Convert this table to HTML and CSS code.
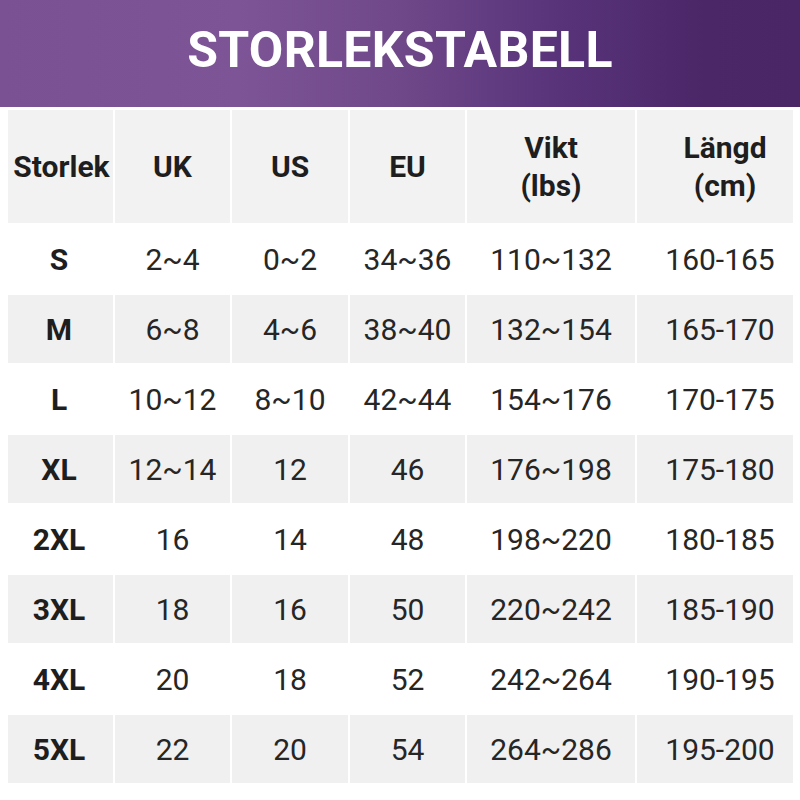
FILE: index.html
```html
<!DOCTYPE html>
<html lang="sv">
<head>
<meta charset="utf-8">
<title>Storlekstabell</title>
<link rel="stylesheet" href="styles.css">
</head>
<body>
<header class="banner"><h1 class="title">STORLEKSTABELL</h1></header>
<table class="chart">
<colgroup>
<col class="c1"><col class="c2"><col class="c3"><col class="c4"><col class="c5"><col class="c6">
</colgroup>
<thead>
<tr class="head"><th class="first">Storlek</th><th>UK</th><th>US</th><th>EU</th><th>Vikt<br>(lbs)</th><th class="last">Längd<br>(cm)</th></tr>
</thead>
<tbody>
<tr class="w"><th class="first">S</th><td>2~4</td><td>0~2</td><td>34~36</td><td>110~132</td><td class="last">160-165</td></tr>
<tr class="g"><th class="first">M</th><td>6~8</td><td>4~6</td><td>38~40</td><td>132~154</td><td class="last">165-170</td></tr>
<tr class="w"><th class="first">L</th><td>10~12</td><td>8~10</td><td>42~44</td><td>154~176</td><td class="last">170-175</td></tr>
<tr class="g"><th class="first">XL</th><td>12~14</td><td>12</td><td>46</td><td>176~198</td><td class="last">175-180</td></tr>
<tr class="w"><th class="first">2XL</th><td>16</td><td>14</td><td>48</td><td>198~220</td><td class="last">180-185</td></tr>
<tr class="g"><th class="first">3XL</th><td>18</td><td>16</td><td>50</td><td>220~242</td><td class="last">185-190</td></tr>
<tr class="w"><th class="first">4XL</th><td>20</td><td>18</td><td>52</td><td>242~264</td><td class="last">190-195</td></tr>
<tr class="g"><th class="first">5XL</th><td>22</td><td>20</td><td>54</td><td>264~286</td><td class="last">195-200</td></tr>
</tbody>
</table>
</body>
</html>
```
FILE: styles.css
```css
html, body {
  margin: 0;
  padding: 0;
  background: #ffffff;
  font-family: Roboto, "Liberation Sans", sans-serif;
  color: #222222;
}
.banner {
  height: 107px;
  display: flex;
  align-items: center;
  justify-content: center;
  background: linear-gradient(90deg, #7a5192 0%, #7d5596 30%, #6f4889 50%, #58337a 70%, #4b2768 88%, #4a2667 100%);
}
.title {
  margin: 0 0 8px 0;
  color: #ffffff;
  font-size: 50px;
  font-weight: 700;
  letter-spacing: 0.3px;
  line-height: 1;
}
.chart {
  margin: 1px 0 0 6px;
  border-collapse: separate;
  border-spacing: 2px;
  table-layout: fixed;
  width: 789px;
}
.c1 { width: 105px; }
.c2 { width: 115px; }
.c3 { width: 116px; }
.c4 { width: 115px; }
.c5 { width: 168px; }
.c6 { width: 156px; }
.chart th, .chart td {
  padding: 0;
  text-align: center;
  vertical-align: middle;
  font-size: 30px;
  height: 68px;
}
.chart th {
  font-weight: 700;
  color: #1e1e1e;
}
.chart td {
  font-weight: 400;
  color: #262626;
}
.head th {
  height: 113px;
  line-height: 38px;
  background: #f2f2f2;
}
.g th, .g td {
  background: #f0f0f0;
}
.w th, .w td {
  background: #ffffff;
}
.chart .first {
  padding-right: 3px;
}
.head .first {
  padding-right: 0;
  padding-left: 2px;
}
.chart .last {
  padding-left: 10px;
}
.head .last {
  padding-left: 20px;
}
```
